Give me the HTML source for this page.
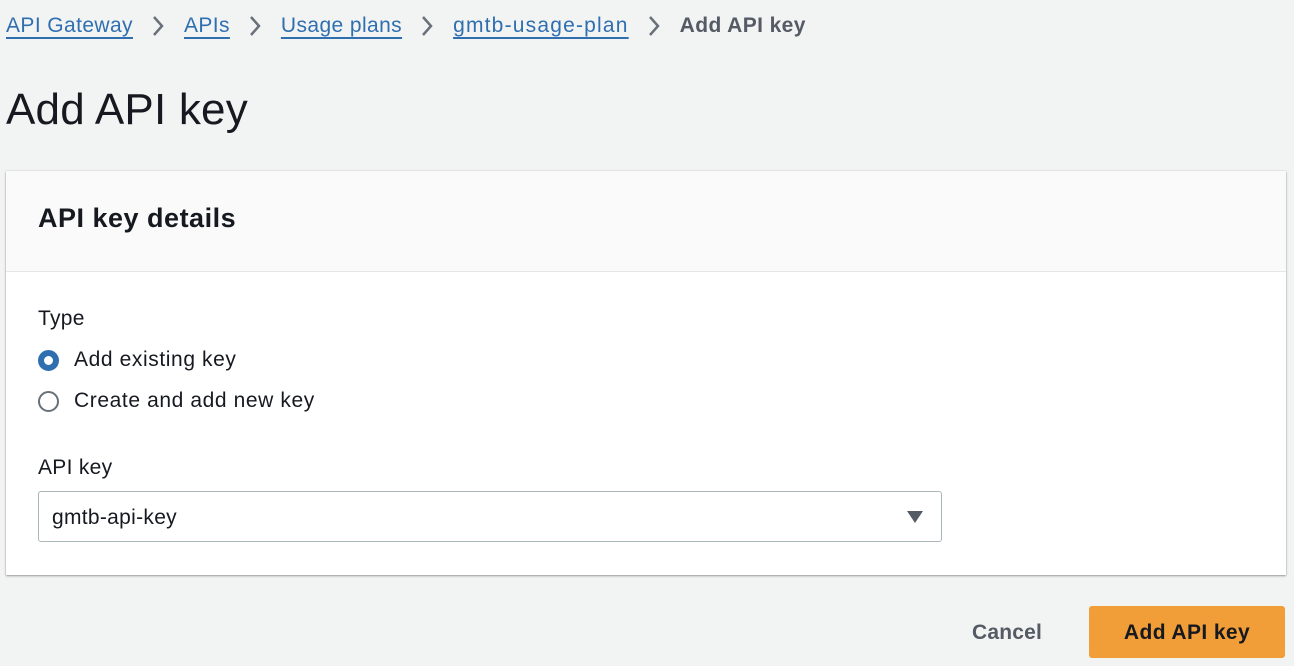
<!DOCTYPE html>
<html><head><meta charset="utf-8"><style>
*{box-sizing:border-box;margin:0;padding:0}
body{width:1294px;height:666px;background:#f2f3f3;font-family:"Liberation Sans",sans-serif;color:#16191f;position:relative;overflow:hidden}
.bc{position:absolute;top:14px;left:6px;font-size:21px;letter-spacing:0.4px;display:flex;align-items:center;white-space:nowrap}
.bc a{color:#2f6fb0;text-decoration:underline;text-underline-offset:5px;text-decoration-thickness:2px}
.bc .sep{margin:0 19px 0 18px;display:inline-block;width:14px;height:22px}
.bc b{color:#545b64}
h1{position:absolute;top:85px;left:6px;font-size:44px;font-weight:normal;letter-spacing:0.2px}
.card{position:absolute;left:6px;top:171px;width:1280px;height:404px;background:#fff;box-shadow:0 1px 2px rgba(0,0,0,.35),0 0 1px rgba(0,0,0,.2)}
.hd{height:101px;background:#fafafa;border-bottom:1px solid #e4e6e8;padding:32px 0 0 32px;font-size:27px;font-weight:bold;letter-spacing:0.5px}
.lbl{position:absolute;left:32px;font-size:21px;letter-spacing:0.3px}
.rad{position:absolute;left:32px;font-size:21px;letter-spacing:0.6px;display:flex;align-items:center}
.rad i{width:21px;height:21px;border-radius:50%;border:2px solid #687078;margin-right:15px;display:inline-block}
.rad i.on{border:6px solid #2f6fb0;background:#fff}
.sel{position:absolute;left:32px;top:320px;width:904px;height:51px;border:1px solid #aab7b8;border-radius:3px;font-size:21px;letter-spacing:0.3px;padding:14px 0 0 13px}
.sel svg{position:absolute;right:18px;top:19px}
.cancel{position:absolute;left:972px;top:621px;font-size:21px;font-weight:bold;color:#545b64;letter-spacing:0.2px}
.btn{position:absolute;left:1089px;top:606px;width:196px;height:52px;background:#f29e38;border-radius:3px;font-size:21px;font-weight:bold;color:#16191f;text-align:center;line-height:54px;letter-spacing:0.4px}
</style></head><body>
<div class="bc"><a>API Gateway</a><svg class="sep" viewBox="0 0 14 22"><path d="M3 2l8 9-8 9" fill="none" stroke="#687078" stroke-width="2.5"/></svg><a>APIs</a><svg class="sep" viewBox="0 0 14 22"><path d="M3 2l8 9-8 9" fill="none" stroke="#687078" stroke-width="2.5"/></svg><a>Usage plans</a><svg class="sep" viewBox="0 0 14 22"><path d="M3 2l8 9-8 9" fill="none" stroke="#687078" stroke-width="2.5"/></svg><a style="letter-spacing:1.2px">gmtb-usage-plan</a><svg class="sep" viewBox="0 0 14 22"><path d="M3 2l8 9-8 9" fill="none" stroke="#687078" stroke-width="2.5"/></svg><b>Add API key</b></div>
<h1>Add API key</h1>
<div class="card">
<div class="hd">API key details</div>
<div class="lbl" style="top:136px">Type</div>
<div class="rad" style="top:177px"><i class="on"></i>Add existing key</div>
<div class="rad" style="top:218px"><i></i>Create and add new key</div>
<div class="lbl" style="top:285px">API key</div>
<div class="sel">gmtb-api-key<svg width="16" height="12" viewBox="0 0 16 12"><path d="M0 0h16L8 12z" fill="#545b64"/></svg></div>
</div>
<div class="cancel">Cancel</div>
<div class="btn">Add API key</div>
</body></html>
